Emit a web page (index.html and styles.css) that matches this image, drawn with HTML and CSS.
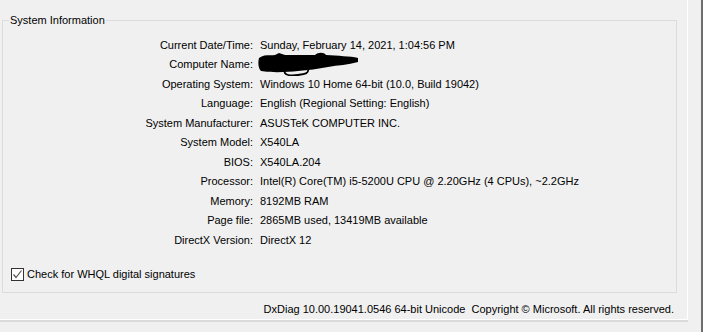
FILE: index.html
```html
<!DOCTYPE html>
<html>
<head>
<meta charset="utf-8">
<link rel="stylesheet" href="styles.css">
</head>
<body>
<div class="screen">
  <div class="tab">
    <fieldset class="group">
      <legend class="group-title">System Information</legend>
      <div class="info">
        <div class="label">Current Date/Time:</div><div class="value">Sunday, February 14, 2021, 1:04:56 PM</div>
        <div class="label">Computer Name:</div><div class="value"><svg class="redact" width="102" height="24" viewBox="0 0 102 24"><path d="M1,6 C6,2 13,4 17,3 L21,1 L27,3 C40,3 52,3 57,3 C60,0 66,0 68,3 C80,4 92,4 100,6 L100,10 C90,13 80,13 70,15 C60,17 50,18 40,19 C30,20 15,21 3,19 C0,16 0,10 1,6 Z" fill="#000"/><path d="M27,18 C25,23 31,24 40,23 C48,22 51,21 50,17" fill="none" stroke="#000" stroke-width="1.8"/></svg></div>
        <div class="label">Operating System:</div><div class="value">Windows 10 Home 64-bit (10.0, Build 19042)</div>
        <div class="label">Language:</div><div class="value">English (Regional Setting: English)</div>
        <div class="label">System Manufacturer:</div><div class="value">ASUSTeK COMPUTER INC.</div>
        <div class="label">System Model:</div><div class="value">X540LA</div>
        <div class="label">BIOS:</div><div class="value">X540LA.204</div>
        <div class="label">Processor:</div><div class="value">Intel(R) Core(TM) i5-5200U CPU @ 2.20GHz (4 CPUs), ~2.2GHz</div>
        <div class="label">Memory:</div><div class="value">8192MB RAM</div>
        <div class="label">Page file:</div><div class="value">2865MB used, 13419MB available</div>
        <div class="label">DirectX Version:</div><div class="value">DirectX 12</div>
      </div>
      <label class="check">
        <span class="box"><svg width="11" height="11" viewBox="0 0 11 11"><path d="M1.5,5.5 L4,8.5 L9.5,1.5" fill="none" stroke="#555" stroke-width="1.2"/></svg></span>
        <span>Check for WHQL digital signatures</span>
      </label>
    </fieldset>
    <div class="footer">DxDiag 10.00.19041.0546 64-bit Unicode&nbsp; Copyright © Microsoft. All rights reserved.</div>
  </div>
  <div class="edge"></div>
</div>
</body>
</html>
```
FILE: styles.css
```css
html, body {
  margin: 0;
  padding: 0;
  background: #f0f0f0;
}
body {
  font-family: "Liberation Sans", Arial, sans-serif;
  font-size: 11px;
  color: #000;
  width: 703px;
  height: 332px;
  overflow: hidden;
}
.screen {
  display: flex;
  height: 332px;
}
.tab {
  width: 687px;
  height: 319px;
  border-right: 1px solid #ffffff;
  border-bottom: 1px solid #ffffff;
  box-shadow: 0 2px 0 0 #dadada;
  display: flex;
  flex-direction: column;
}
.edge {
  margin-left: 13px;
  width: 2px;
  height: 332px;
  background: #6e6e6e;
}
.group {
  margin: 13px 0 0 2px;
  width: 673px;
  height: 278px;
  box-sizing: content-box;
  border: 1px solid #dcdcdc;
  padding: 0;
  min-width: 0;
}
.group-title {
  margin-left: 6px;
  padding: 0 1px;
  line-height: 14px;
}
.info {
  display: grid;
  grid-template-columns: 250px 1fr;
  column-gap: 7px;
  grid-auto-rows: 19.5px;
  align-items: center;
  margin-top: 8px;
}
.label {
  text-align: right;
  white-space: nowrap;
}
.value {
  white-space: nowrap;
  display: flex;
  align-items: center;
}
.redact {
  display: block;
  margin-left: -2px;
}
.check {
  display: flex;
  align-items: center;
  gap: 3px;
  margin: 18px 0 0 8px;
}
.box {
  width: 11px;
  height: 11px;
  border: 1px solid #333;
  background: #fff;
  display: flex;
}
.footer {
  margin-top: 10px;
  padding-right: 13px;
  text-align: right;
  white-space: nowrap;
}
```
